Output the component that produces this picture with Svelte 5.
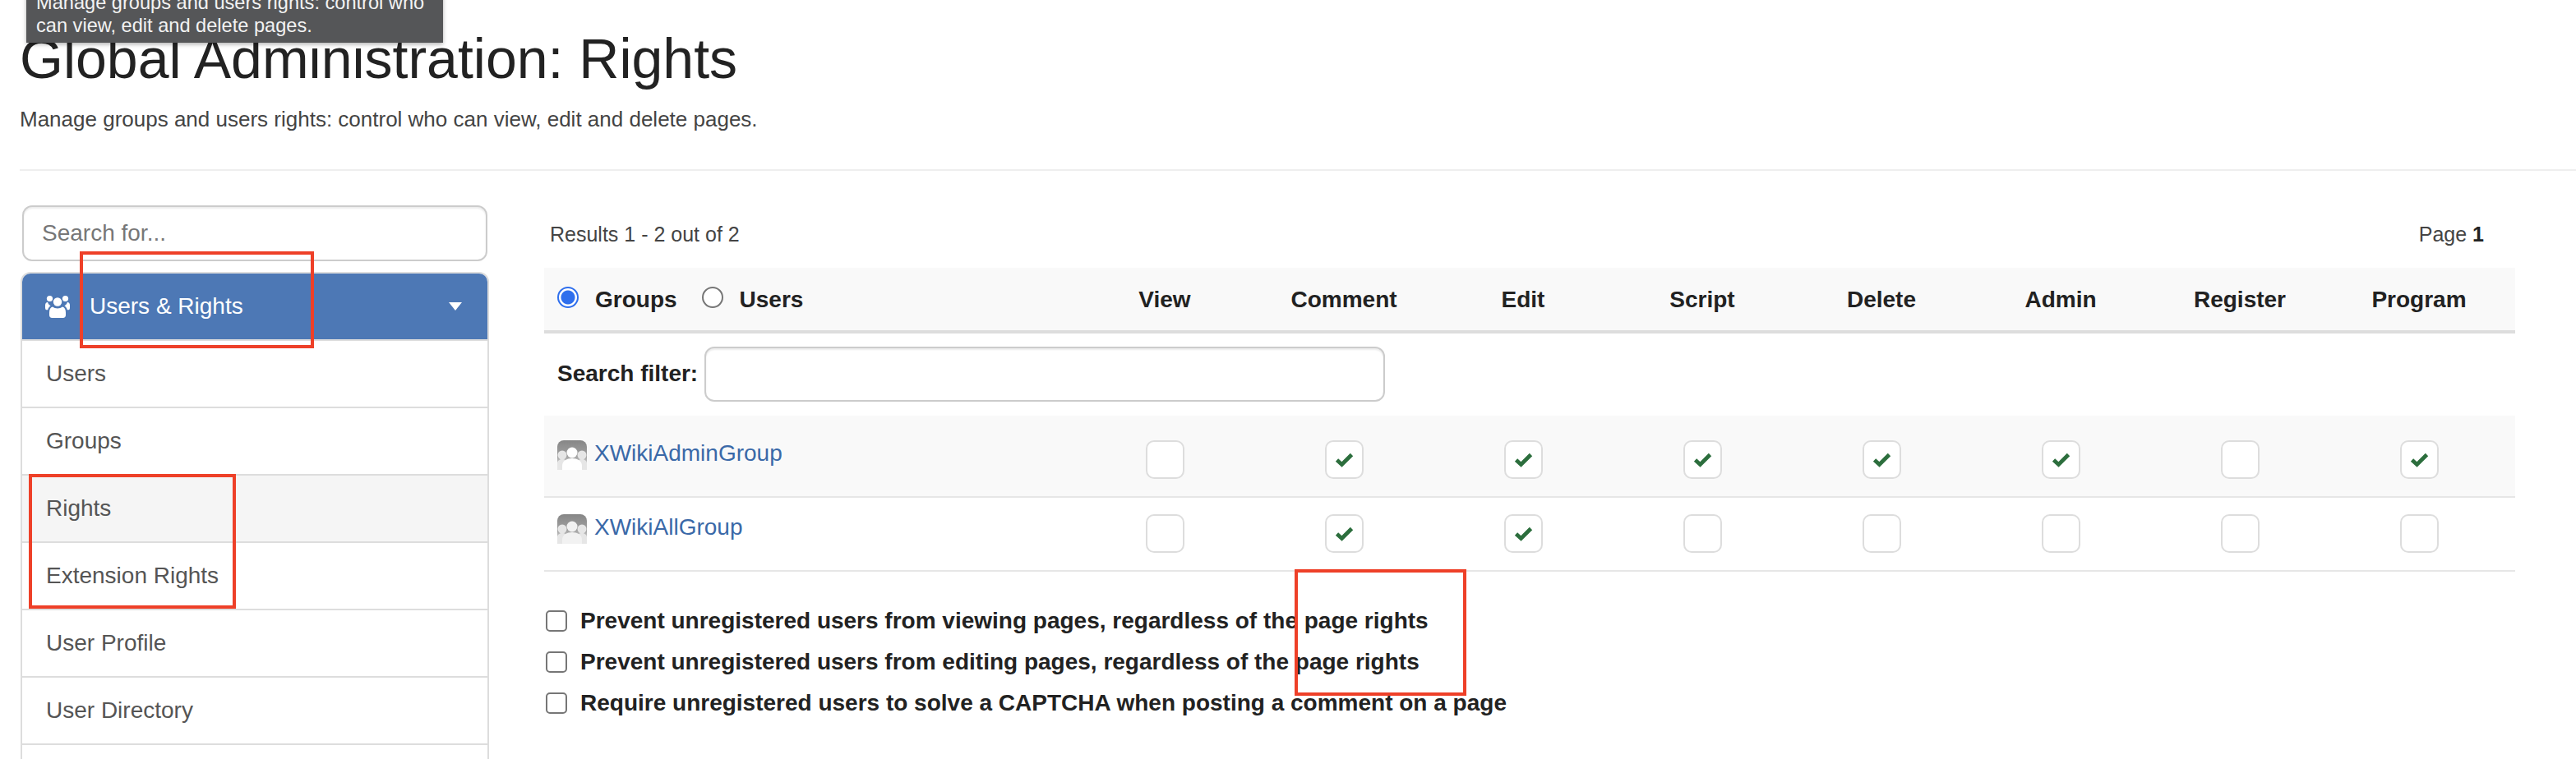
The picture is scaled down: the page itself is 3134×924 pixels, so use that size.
<script>
    const menu = ["Users", "Groups", "Rights", "Extension Rights", "User Profile", "User Directory", ""]
    const columns = ["View", "Comment", "Edit", "Script", "Delete", "Admin", "Register", "Program"]
    const groups = [
        { name: "XWikiAdminGroup", rights: [0, 1, 1, 1, 1, 1, 0, 1], cls: "first" },
        { name: "XWikiAllGroup", rights: [0, 1, 1, 0, 0, 0, 0, 0], cls: "second" }
    ]
    const options = [
        "Prevent unregistered users from viewing pages, regardless of the page rights",
        "Prevent unregistered users from editing pages, regardless of the page rights",
        "Require unregistered users to solve a CAPTCHA when posting a comment on a page"
    ]
</script>

<div class="page">
    <div class="tooltip">Manage groups and users rights: control who can view, edit and delete pages.</div>

    <header class="head">
        <h1>Global Administration: Rights</h1>
        <p>Manage groups and users rights: control who can view, edit and delete pages.</p>
    </header>

    <div class="main">
        <aside class="sidebar">
            <input class="search" placeholder="Search for..." />
            <div class="panel">
                <div class="panel-title">
                    <svg class="users-icon" viewBox="0 0 30 28" fill="#fff">
                        <circle cx="15" cy="8.5" r="5.2" />
                        <circle cx="5.5" cy="4.5" r="3.6" />
                        <circle cx="24.5" cy="4.5" r="3.6" />
                        <path d="M0 12.5c0-2 1-3.5 3-3.8 .6 2 1.8 3.5 3.6 4.5-1.8 1.2-3 3-3.4 5H1.500C.5 18.200 0 17 0 15.500z" />
                        <path d="M30 12.500c0-2-1-3.500-3-3.800-.6 2-1.800 3.500-3.600 4.500 1.800 1.200 3 3 3.400 5h1.700c1 0 1.500-1.200 1.500-2.700z" />
                        <path d="M9 14.500c1.500 1.300 3.800 2 6 2s4.500-.7 6-2c2.500.5 4 3 4 7v3c0 2-1.300 3.500-3.200 3.500H8.200C6.300 28 5 26.500 5 24.500v-3c0-4 1.500-6.500 4-7z" />
                    </svg>
                    <span>Users &amp; Rights</span>
                    <i class="caret"></i>
                </div>
                {#each menu as item}
                    <div class="item" class:active={item === "Rights"}>{item}</div>
                {/each}
            </div>
        </aside>

        <section class="content">
            <div class="results">
                <span>Results 1 - 2 out of 2</span>
                <span>Page <b>1</b></span>
            </div>

            <div class="row table-head">
                <div class="who">
                    <label><input type="radio" name="who" checked /> Groups</label>
                    <label><input type="radio" name="who" /> Users</label>
                </div>
                {#each columns as col}
                    <div class="col">{col}</div>
                {/each}
            </div>

            <div class="filter">
                <label for="filter-input">Search filter:</label>
                <input id="filter-input" />
            </div>

            {#each groups as group}
                <div class="row group {group.cls}">
                    <div class="who-cell">
                        <svg class="avatar" viewBox="0 0 36 36">
                            <defs>
                                <linearGradient id="fade-{group.cls}" x1="0" y1="0" x2="0" y2="1">
                                    <stop offset="0" stop-color="#868686" />
                                    <stop offset="0.55" stop-color="#a2a2a2" />
                                    <stop offset="1" stop-color="#f4f4f4" />
                                </linearGradient>
                            </defs>
                            <path d="M8 0h20a8 8 0 0 1 8 8v28H0V8a8 8 0 0 1 8-8z" fill="url(#fade-{group.cls})" />
                            <g fill="#e6e6e6">
                                <circle cx="6" cy="18" r="5.500" />
                                <circle cx="30" cy="18" r="5.500" />
                                <path d="M0 36v-8c0-3 3-5 6-5s6 2 6 5v8zM24 36v-8c0-3 3-5 6-5s6 2 6 5v8z" />
                            </g>
                            <g fill={group.cls === "first" ? "#fff" : "#f2f2f2"}>
                                <circle cx="18" cy="15" r="6.500" />
                                <path d="M6 36v-5c0-6 6-9 12-9s12 3 12 9v5z" />
                            </g>
                        </svg>
                        <a href="#top">{group.name}</a>
                    </div>
                    {#each group.rights as on}
                        <div class="col">
                            <span class="box">
                                {#if on}
                                    <svg viewBox="0 0 43 43" width="43" height="43">
                                        <path d="M12.500 22 L18.500 27.500 L30.500 15.500" fill="none" stroke="#2c6e3d" stroke-width="4.800" />
                                    </svg>
                                {/if}
                            </span>
                        </div>
                    {/each}
                </div>
            {/each}

            <div class="options">
                {#each options as option}
                    <label class="option"><input type="checkbox" /> {option}</label>
                {/each}
            </div>
        </section>
    </div>

    <div class="mark mark-a"></div>
    <div class="mark mark-b"></div>
    <div class="mark mark-c"></div>
</div>

<style>
    :global(body) {
        margin: 0;
        background: #fff;
    }

    .page {
        position: relative;
        height: 924px;
        overflow: hidden;
        padding-left: 24px;
        font-family: "Liberation Sans", Arial, sans-serif;
        font-size: 28px;
        color: #333;
    }

    .tooltip {
        position: absolute;
        left: 32px;
        top: -18px;
        width: 507px;
        height: 70px;
        box-sizing: border-box;
        padding: 7px 12px;
        background: #555658;
        box-shadow: 0 2px 5px rgba(0, 0, 0, 0.3);
        color: #f2f2f2;
        font-size: 23.600px;
        line-height: 28px;
        z-index: 2;
    }

    .head {
        height: 206px;
        border-bottom: 2px solid #eee;
    }

    h1 {
        margin: 0;
        padding-top: 33px;
        font-size: 68px;
        font-weight: 400;
        line-height: 76px;
        color: #222;
    }

    .head p {
        margin: 0;
        padding-top: 20px;
        font-size: 26px;
        line-height: 32px;
        color: #444;
    }

    .main {
        display: flex;
        gap: 67px;
        padding-top: 42px;
        padding-left: 1px;
    }

    .sidebar {
        width: 570px;
        flex: none;
    }

    .search {
        display: block;
        box-sizing: border-box;
        width: 566px;
        height: 68px;
        margin: 0 2px 13px;
        padding: 0 22px;
        border: 2px solid #ccc;
        border-radius: 12px;
        box-shadow: inset 0 2px 2px rgba(0, 0, 0, 0.08);
        font: inherit;
        color: #555;
    }

    .search::placeholder {
        color: #777;
    }

    .panel {
        border: 2px solid #ddd;
        border-radius: 12px 12px 0 0;
    }

    .panel-title {
        display: flex;
        align-items: center;
        height: 80px;
        padding: 0 30px 0 28px;
        background: #4d78b5;
        border-bottom: 2px solid #ddd;
        border-radius: 10px 10px 0 0;
        color: #fff;
    }

    .users-icon {
        width: 30px;
        height: 28px;
        margin-right: 24px;
    }

    .caret {
        margin-left: auto;
        margin-right: 1px;
        border-top: 10px solid #fff;
        border-left: 8px solid transparent;
        border-right: 8px solid transparent;
    }

    .item {
        box-sizing: border-box;
        height: 82px;
        padding: 0 29px;
        line-height: 79px;
        border-bottom: 2px solid #ddd;
        color: #555;
    }

    .item.active {
        background: #f5f5f5;
    }

    .content {
        width: 2398px;
        flex: none;
    }

    .results {
        display: flex;
        justify-content: space-between;
        height: 76px;
        padding: 0 38px 0 7px;
        box-sizing: border-box;
        font-size: 25px;
        line-height: 70px;
        color: #444;
    }

    .results b {
        color: #222;
    }

    .row {
        display: grid;
        grid-template-columns: 646px repeat(8, 218px);
        padding-right: 8px;
        box-sizing: border-box;
    }

    .col {
        display: flex;
        justify-content: center;
    }

    .table-head {
        height: 80px;
        align-items: center;
        padding-top: 2px;
        background: #f9f9f9;
        border-bottom: 4px solid #ddd;
        font-weight: 700;
        color: #222;
    }

    .who {
        display: flex;
        gap: 30px;
        padding-left: 16px;
    }

    .who label {
        display: flex;
        align-items: center;
        gap: 20px;
    }

    input[type="radio"] {
        appearance: none;
        width: 26px;
        height: 26px;
        margin: -6px 0 0;
        border: 2px solid #767676;
        border-radius: 50%;
        background: #fff;
    }

    input[type="radio"]:checked {
        border-color: #2f6fed;
        background: radial-gradient(circle, #2f6fed 0 8px, #fff 9px);
    }

    .filter {
        display: flex;
        align-items: center;
        gap: 8px;
        height: 100px;
        padding: 0 0 2px 16px;
        box-sizing: border-box;
        font-weight: 700;
        color: #222;
    }

    .filter input {
        box-sizing: border-box;
        width: 828px;
        height: 67px;
        border: 2px solid #ccc;
        border-radius: 12px;
        box-shadow: inset 0 2px 2px rgba(0, 0, 0, 0.08);
    }

    .group {
        border-bottom: 2px solid #e6e6e6;
    }

    .group.first {
        height: 100px;
        padding-top: 30px;
        background: #f9f9f9;
    }

    .group.second {
        height: 90px;
        padding-top: 20px;
    }

    .who-cell {
        display: flex;
        align-items: flex-start;
        gap: 9px;
        padding-left: 16px;
    }

    .avatar {
        width: 36px;
        height: 36px;
        flex: none;
    }

    .who-cell a {
        color: #3a69a8;
        text-decoration: none;
        line-height: 32px;
    }

    .box {
        display: block;
        box-sizing: border-box;
        width: 47px;
        height: 47px;
        background: #fff;
        border: 2px solid #ddd;
        border-radius: 10px;
    }

    .box svg {
        display: block;
    }

    .options {
        padding-top: 35px;
        padding-left: 2px;
    }

    .option {
        display: flex;
        align-items: center;
        gap: 16px;
        height: 50px;
        font-weight: 700;
        color: #222;
    }

    input[type="checkbox"] {
        appearance: none;
        width: 26px;
        height: 26px;
        margin: 0;
        border: 2px solid #767676;
        border-radius: 5px;
        background: #fff;
    }

    .mark {
        position: absolute;
        box-sizing: border-box;
        border: 4px solid #ee4028;
        z-index: 1;
    }

    .mark-a {
        left: 97px;
        top: 306px;
        width: 285px;
        height: 118px;
    }

    .mark-b {
        left: 35px;
        top: 577px;
        width: 252px;
        height: 164px;
    }

    .mark-c {
        left: 1575px;
        top: 693px;
        width: 209px;
        height: 154px;
    }
</style>
